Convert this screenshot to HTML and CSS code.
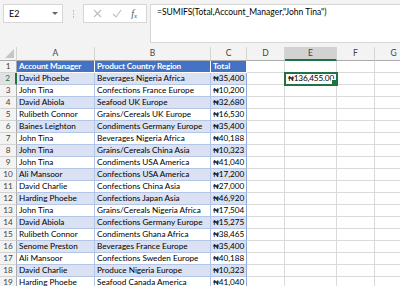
FILE: index.html
```html
<!doctype html>
<html lang="en">
<head>
  <meta charset="utf-8">
  <title>SUMIFS | Sheet1</title>
  <link rel="stylesheet" href="styles.css">
</head>
<body>
<div class="ribbon">
  <div class="namebox">
    <span>E2</span>
    <svg class="caret" width="6" height="4" viewBox="0 0 6 4"><path d="M0 0h6L3 3z" fill="#666"/></svg>
  </div>
  <div class="grip"><i></i><i></i><i></i></div>
  <div class="fxbox">
    <svg width="9" height="9" viewBox="0 0 9 9"><path d="M1 1l7 7M8 1l-7 7" stroke="#bdbdbd" stroke-width="1.1" fill="none"/></svg>
    <svg width="10" height="9" viewBox="0 0 10 9"><path d="M1 5l3 3 5-7" stroke="#bdbdbd" stroke-width="1.1" fill="none"/></svg>
    <span class="fx">f<sub>x</sub></span>
  </div>
  <div class="formula">=SUMIFS(Total,Account_Manager,"John Tina")</div>
</div>
<div class="sheet" id="sheet">
  <div class="row head">
    <div class="corner"><svg width="9" height="9" viewBox="0 0 9 9"><path d="M9 0v9H0z" fill="#c6c6c6"/></svg></div>
    <div class="col">A</div><div class="col">B</div><div class="col">C</div><div class="col">D</div>
    <div class="col sel">E</div><div class="col">F</div><div class="col">G</div>
  </div>
</div>
<script>
const rows=[
  ['David Phoebe','Beverages Nigeria Africa','35,400'],
  ['John Tina','Confections France Europe','10,200'],
  ['David Abiola','Seafood UK Europe','32,680'],
  ['Rulibeth Connor','Grains/Cereals UK Europe','16,530'],
  ['Baines Leighton','Condiments Germany Europe','35,400'],
  ['John Tina','Beverages Nigeria Africa','40,188'],
  ['John Tina','Grains/Cereals China Asia','10,323'],
  ['John Tina','Condiments USA America','41,040'],
  ['Ali Mansoor','Confections USA America','17,200'],
  ['David Charlie','Confections China Asia','27,000'],
  ['Harding Phoebe','Confections Japan Asia','46,920'],
  ['John Tina','Grains/Cereals Nigeria Africa','17,504'],
  ['David Abiola','Confections Germany Europe','15,275'],
  ['Rulibeth Connor','Condiments Ghana Africa','38,465'],
  ['Senome Preston','Beverages France Europe','35,400'],
  ['Ali Mansoor','Confections Sweden Europe','40,188'],
  ['David Charlie','Produce Nigeria Europe','10,323'],
  ['Harding Phoebe','Seafood Canada America','41,040']
];
const naira=v=>`<span class="cur">₦</span>${v}`;
const sheet=document.getElementById('sheet');
function addRow(n,cells,cls){
  const r=document.createElement('div');
  r.className='row '+cls;
  const sel=n===2;
  r.innerHTML=`<div class="num${sel?' sel':''}">${n}</div>`+
    `<div class="c t">${cells[0]}</div><div class="c t">${cells[1]}</div><div class="c t tc">${cells[2]}</div>`+
    `<div class="c"></div><div class="c${sel?' active':''}">${sel?naira('136,455.00'):''}</div><div class="c"></div><div class="c"></div>`;
  sheet.appendChild(r);
}
addRow(1,['Account Manager','Product Country Region','Total'],'th');
rows.forEach((d,i)=>addRow(i+2,[d[0],d[1],naira(d[2])],i%2===0?'band':'plain'));
</script>
</body>
</html>
```

FILE: styles.css
```css
:root{--chrome:#f3f3f3;--grid:#dadada;--green:#217346;--blue:#4472c4;--band:#d9e1f2;--tline:#b4c6e7;}
*{box-sizing:border-box;margin:0;padding:0;}
body{width:400px;height:286px;overflow:hidden;background:#fff;font-family:Lato,'Noto Sans',sans-serif;font-size:8.2px;color:#000;}
/* formula bar */
.ribbon{height:47px;background:var(--chrome);display:flex;align-items:flex-start;padding:4px 0 0 3px;}
.namebox{width:60px;height:19px;background:#fff;border:1px solid #d6d6d6;display:flex;align-items:center;justify-content:space-between;padding:0 4px 0 5px;font-size:9px;}
.caret{margin-top:1px;}
.grip{width:20px;height:19px;display:flex;flex-direction:column;align-items:center;justify-content:center;gap:1px;}
.grip i{width:1px;height:2px;background:#bdbdbd;}
.fxbox{width:64px;height:19px;background:#fff;border:1px solid #d6d6d6;display:flex;align-items:center;justify-content:space-around;padding:0 4px;}
.fx{font-family:'Liberation Serif',serif;font-style:italic;font-size:10px;color:#555;}
.fx sub{font-size:7px;vertical-align:-1px;}
.formula{flex:1;height:39px;margin-left:3px;background:#fff;border:1px solid #d6d6d6;border-right:none;padding:2px 0 0 6px;font-size:8.5px;}
/* grid */
.sheet{background:#fff;}
.row{display:grid;grid-template-columns:17px 78px 116px 36px 38px 52px 38px 38px;height:12px;}
.row>div{border-right:1px solid var(--grid);border-bottom:1px solid var(--grid);overflow:hidden;white-space:nowrap;line-height:11px;}
.row.head{height:14px;background:var(--chrome);}
.row.head>div{border-color:#d4d4d4;border-bottom-color:#ababab;text-align:center;line-height:13px;color:#444;font-size:8.5px;}
.corner{display:flex;align-items:flex-end;justify-content:flex-end;padding:0 2px 2px 0;}
.col.sel{background:#d2d2d2;color:var(--green);border-bottom:2px solid var(--green)!important;}
.num{background:var(--chrome);text-align:center;color:#444;border-color:#d4d4d4!important;border-right-color:#ababab!important;}
.num.sel{background:#e1e1e1;color:var(--green);border-right:2px solid var(--green)!important;}
.c{padding:0 2px;}
.t{border-color:var(--tline)!important;}
.tc{text-align:right;border-right-color:#8ea9db!important;padding-right:3px;}
.cur{font-family:Roboto,'DejaVu Sans',sans-serif;font-size:7.6px;letter-spacing:-.3px;}
.th .t{background:var(--blue);color:#fff;font-weight:700;letter-spacing:-.15px;border-color:#fff!important;}
.th .tc{text-align:left;}
.band .t{background:var(--band);}
.plain .t{background:#fff;}
.active{position:relative;text-align:right;outline:2px solid var(--green);outline-offset:-1px;padding-right:2px;letter-spacing:-.15px;}
.active::after{content:'';position:absolute;right:-1px;bottom:-1px;width:4px;height:4px;background:var(--green);border:1px solid #fff;}
```
